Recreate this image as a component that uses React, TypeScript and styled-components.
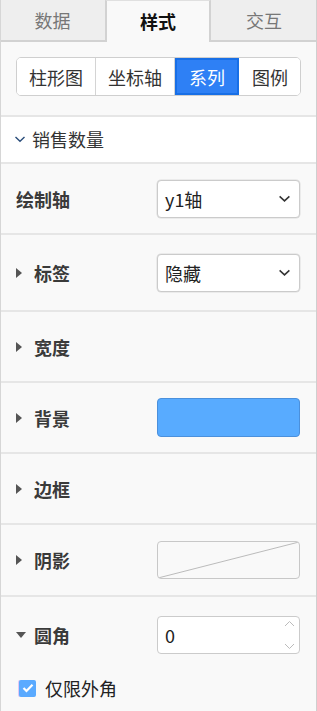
import React from "react";
import styled, { createGlobalStyle } from "styled-components";

const Global = createGlobalStyle`
  html, body { margin: 0; padding: 0; background: #f9f9f9; }
  body { font-family: "Noto Sans CJK SC", "Noto Sans", sans-serif; color: #333; }
  * { box-sizing: border-box; }
`;

const Panel = styled.div`
  width: 317px;
  height: 711px;
  overflow: hidden;
  background: #f9f9f9;
  border-left: 1px solid #d6d6d6;
  border-right: 1px solid #cfcfcf;
  display: flex;
  flex-direction: column;
`;

const TabBar = styled.div`
  display: grid;
  grid-template-columns: 105px 106px 1fr;
  height: 42px;
  margin-left: -1px;
  margin-right: -1px;
`;

const Tab = styled.div<{ $active?: boolean }>`
  display: flex;
  align-items: center;
  justify-content: center;
  font-size: 18px;
  font-weight: ${(p) => (p.$active ? 700 : 400)};
  color: ${(p) => (p.$active ? "#111" : "#777")};
  background: ${(p) => (p.$active ? "#f9f9f9" : "#eeeeee")};
  border-bottom: ${(p) => (p.$active ? "none" : "2px solid #d2d2d2")};
  border-left: ${(p) => (p.$active ? "2px solid #d2d2d2" : "none")};
  border-right: ${(p) => (p.$active ? "2px solid #d2d2d2" : "none")};
  border-top: ${(p) => (p.$active ? "1px solid #e0e0e0" : "none")};
  padding-bottom: ${(p) => (p.$active ? "2px" : "0")};
`;

const SegmentArea = styled.div`
  padding: 15px 15px 19px;
  border-bottom: 2px solid #e6e6e6;
`;

const Segmented = styled.div`
  display: flex;
  height: 39px;
  width: 285px;
  border: 1px solid #cfcfcf;
  border-radius: 5px;
  background: #fff;
  overflow: hidden;
`;

const Segment = styled.div<{ $w: number; $active?: boolean; $last?: boolean }>`
  width: ${(p) => p.$w}px;
  display: flex;
  align-items: center;
  justify-content: center;
  font-size: 18px;
  color: ${(p) => (p.$active ? "#fff" : "#333")};
  background: ${(p) => (p.$active ? "#2e80f5" : "#fff")};
  border: ${(p) => (p.$active ? "2px solid #186fe6" : "none")};
  border-right: ${(p) =>
    p.$active ? "2px solid #186fe6" : p.$last ? "none" : "1px solid #d4d4d4"};
  flex-shrink: 0;
  flex-grow: ${(p) => (p.$last ? 1 : 0)};
`;

const SectionHeader = styled.div`
  height: 47px;
  background: #fff;
  border-bottom: 2px solid #e6e6e6;
  display: flex;
  align-items: center;
  padding-left: 13px;
  gap: 6px;
  font-size: 18px;
  color: #333;
  padding-bottom: 2px;
`;

const Row = styled.div<{ $h: number }>`
  height: ${(p) => p.$h}px;
  flex-shrink: 0;
  border-bottom: 2px solid #e6e6e6;
  display: flex;
  align-items: center;
  justify-content: space-between;
  padding: 0 16px 0 15px;
`;

const Label = styled.div`
  display: flex;
  align-items: center;
  gap: 8px;
  font-size: 18px;
  font-weight: 700;
  color: #3a3a3a;
`;

const CaretSlot = styled.span`
  width: 10px;
  display: flex;
  align-items: center;
  justify-content: flex-start;
`;

const Caret = styled.span<{ $open?: boolean }>`
  display: inline-block;
  width: 0;
  height: 0;
  ${(p) =>
    p.$open
      ? `border-left: 5px solid transparent; border-right: 5px solid transparent; border-top: 6px solid #555;`
      : `border-top: 5px solid transparent; border-bottom: 5px solid transparent; border-left: 6px solid #555;`}
`;

const Select = styled.div`
  width: 143px;
  height: 38px;
  border: 1px solid #cbcbcb;
  border-radius: 4px;
  background: #fff;
  display: flex;
  align-items: center;
  justify-content: space-between;
  padding: 0 8px 0 7px;
  font-size: 18px;
  color: #222;
  box-shadow: 0 0 0 0.5px #ddd;
`;

const ColorBox = styled.div<{ $c: string }>`
  width: 143px;
  height: 39px;
  border-radius: 4px;
  background: ${(p) => p.$c};
  border: 1px solid #4b90dc;
`;

const EmptyBox = styled.div`
  width: 143px;
  height: 38px;
  border-radius: 4px;
  border: 1px solid #c8c8c8;
  background: #f9f9f9;
  overflow: hidden;
`;

const NumberInput = styled.div`
  width: 143px;
  height: 38px;
  border: 1px solid #cbcbcb;
  border-radius: 4px;
  background: #fff;
  display: flex;
  align-items: center;
  justify-content: space-between;
  padding: 0 4px 0 7px;
  font-size: 18px;
  color: #222;
`;

const Spinner = styled.div`
  display: flex;
  flex-direction: column;
  align-items: center;
  justify-content: space-between;
  height: 30px;
  width: 12px;
`;

const LastRow = styled.div`
  display: flex;
  flex-direction: column;
`;

const RoundRow = styled.div`
  height: 76px;
  display: flex;
  align-items: center;
  justify-content: space-between;
  padding: 0 16px 0 15px;
`;

const CheckRow = styled.div`
  display: flex;
  align-items: center;
  gap: 9px;
  padding-left: 18px;
  height: 30px;
  font-size: 18px;
  color: #222;
`;

const CheckBox = styled.span`
  width: 17px;
  height: 17px;
  border-radius: 2px;
  background: #5aaaff;
  display: flex;
  align-items: center;
  justify-content: center;
  box-shadow: -1px 0 0 #e3c8f3;
`;

const Chevron = ({ size = 12, color = "#333" }: { size?: number; color?: string }) => (
  <svg width={size} height={size} viewBox="0 0 12 12" fill="none">
    <path d="M1.5 4 L6 8.2 L10.5 4" stroke={color} strokeWidth="1.4" />
  </svg>
);

const Expander = ({ open }: { open?: boolean }) => (
  <CaretSlot>
    <Caret $open={open} />
  </CaretSlot>
);

export default function App() {
  return (
    <>
      <Global />
      <Panel>
        <TabBar>
          <Tab>数据</Tab>
          <Tab $active>样式</Tab>
          <Tab>交互</Tab>
        </TabBar>
        <SegmentArea>
          <Segmented>
            <Segment $w={79}>柱形图</Segment>
            <Segment $w={79}>坐标轴</Segment>
            <Segment $w={64} $active>
              系列
            </Segment>
            <Segment $w={62} $last>
              图例
            </Segment>
          </Segmented>
        </SegmentArea>
        <SectionHeader>
          <Chevron size={12} color="#2a4d7a" />
          销售数量
        </SectionHeader>
        <Row $h={71}>
          <Label>绘制轴</Label>
          <Select>
            <span>y1轴</span>
            <Chevron size={13} />
          </Select>
        </Row>
        <Row $h={77}>
          <Label>
            <Expander />
            标签
          </Label>
          <Select>
            <span>隐藏</span>
            <Chevron size={13} />
          </Select>
        </Row>
        <Row $h={71}>
          <Label>
            <Expander />
            宽度
          </Label>
        </Row>
        <Row $h={71}>
          <Label>
            <Expander />
            背景
          </Label>
          <ColorBox $c="#58abff" />
        </Row>
        <Row $h={71}>
          <Label>
            <Expander />
            边框
          </Label>
        </Row>
        <Row $h={72}>
          <Label>
            <Expander />
            阴影
          </Label>
          <EmptyBox>
            <svg width="141" height="36" viewBox="0 0 141 36">
              <line x1="0" y1="36" x2="141" y2="0" stroke="#bbb" strokeWidth="1" />
            </svg>
          </EmptyBox>
        </Row>
        <LastRow>
          <RoundRow>
            <Label>
              <Expander open />
              圆角
            </Label>
            <NumberInput>
              <span>0</span>
              <Spinner>
                <svg width="11" height="7" viewBox="0 0 11 7">
                  <path d="M1 6 L5.5 1.5 L10 6" stroke="#bbb" fill="none" strokeWidth="1" />
                </svg>
                <svg width="11" height="7" viewBox="0 0 11 7">
                  <path d="M1 1 L5.5 5.5 L10 1" stroke="#bbb" fill="none" strokeWidth="1" />
                </svg>
              </Spinner>
            </NumberInput>
          </RoundRow>
          <CheckRow>
            <CheckBox>
              <svg width="12" height="10" viewBox="0 0 12 10">
                <path d="M1.5 5 L4.5 8 L10.5 1.8" stroke="#fff" strokeWidth="2.2" fill="none" />
              </svg>
            </CheckBox>
            仅限外角
          </CheckRow>
        </LastRow>
      </Panel>
    </>
  );
}
